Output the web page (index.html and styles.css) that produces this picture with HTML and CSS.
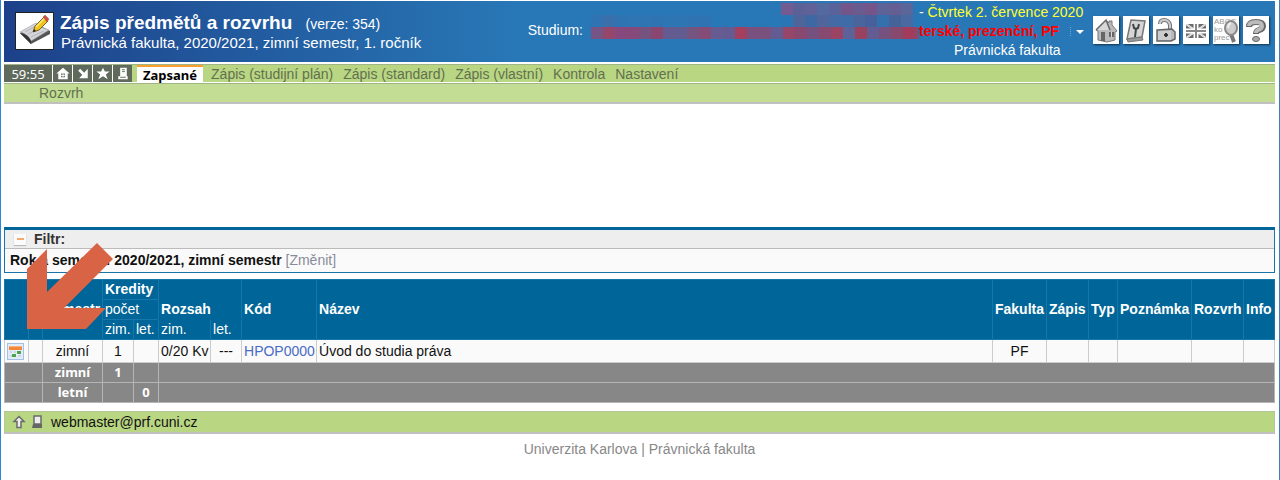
FILE: index.html
```html
<!DOCTYPE html>
<html lang="cs">
<head>
  <meta charset="UTF-8">
  <meta name="viewport" content="width=device-width, initial-scale=1.0">
  <title>Zápis předmětů a rozvrhu</title>
  <link rel="stylesheet" href="styles.css">
</head>
<body>

  <header class="top">
    <svg class="logo" viewBox="0 0 39 38" aria-hidden="true">
      <rect x=".5" y=".5" width="38" height="37" fill="#fff" stroke="#222"/>
      <path d="M5 21l17-9 13 7v3L16 32z" fill="#555"/>
      <path d="M5 20l16-9q3 4 13 7L16 29Q13 22 5 20z" fill="#d3d5da" stroke="#999" stroke-width=".6"/>
      <path d="M5 21q8 1 11 8v3z" fill="#333"/>
      <path d="M10 20l11-6M13 22l13-6M16 25l13-6" stroke="#b2b4ba" fill="none"/>
      <path d="M18 20l2-6 9-9 4 4-9 9z" fill="#f1c21b" stroke="#5d4a0b" stroke-width=".8"/>
      <path d="M21 15l9-9" stroke="#ffe97b" stroke-width="1.5"/>
      <path d="M28 5l2-2 4 4-2 3z" fill="#d9484e" stroke="#772" stroke-width=".5"/>
      <path d="M18 20l1-3 2 2z" fill="#222"/>
    </svg>
    <div class="title">
      <h1>Zápis předmětů a rozvrhu <span class="version">(verze: 354)</span></h1>
      <p>Právnická fakulta, 2020/2021, zimní semestr, 1. ročník</p>
    </div>
    <div class="study">
      <span class="study-label">Studium:</span>
      <svg class="mosaic" viewBox="0 0 328 36" shape-rendering="crispEdges" aria-hidden="true">
        <g id="mosaic"></g>
      </svg>
      <div class="study-info">
        <div>- <span class="date">Čtvrtek 2. července 2020</span></div>
        <div class="study-type">
          <strong>terské, prezenční, PF</strong>
          <button class="drop" aria-label="Výběr studia"><svg viewBox="0 0 16 12"><path d="M1.5 1v10" stroke="#6ea4d3" stroke-dasharray="1 1"/><path d="M7 4h8l-4 4z" fill="#fff"/></svg></button>
        </div>
        <div class="faculty">Právnická fakulta</div>
      </div>
    </div>
    <div class="tools">
      <button aria-label="Domů"><svg viewBox="0 0 26 28">
        <path d="M3 14L13 4l3 3V5h3v4l5 6-2 1v8l-8 2-9-2v-9z" fill="#bbb" stroke="#777"/>
        <path d="M3 14L13 4l4 10" fill="#d8d8d8" stroke="#666" stroke-width="1.5"/>
        <path d="M8 16h4v9H8zM16 16h5v5h-5z" fill="#666"/><path d="M18.5 16v5" stroke="#ddd"/>
      </svg></button>
      <button aria-label="Nástroje"><svg viewBox="0 0 26 28">
        <path d="M8 4l14 1-3 16-15 2z" fill="#d5d5d5" stroke="#777" stroke-width="1.5"/>
        <path d="M4 23l15-2 1 3-15 2z" fill="#999" stroke="#777"/>
        <path d="M10 8l1 4 2 1-1 8M16 8l-1 4-2 1" fill="none" stroke="#444" stroke-width="2"/>
      </svg></button>
      <button aria-label="Odhlásit"><svg viewBox="0 0 26 28">
        <path d="M7 8q0-4 4-4 5 0 6 5v5" fill="none" stroke="#777" stroke-width="4"/>
        <path d="M7 8q0-4 4-4 5 0 6 5v5" fill="none" stroke="#ccc" stroke-width="2"/>
        <path d="M4 14l15-1 3 3v7l-4 2H4z" fill="#bbb" stroke="#666" stroke-width="1.5"/>
        <path d="M5 15h13v9H5z" fill="#ccc"/><path d="M13 17v4M11 19h4" stroke="#333" stroke-width="2"/>
      </svg></button>
      <button aria-label="English"><svg viewBox="0 0 26 28">
        <path d="M3 8h20v14H3z" fill="#6b6b6b"/>
        <path d="M3 8l20 14M23 8L3 22" stroke="#fff" stroke-width="2"/>
        <path d="M3 8l20 14M23 8L3 22" stroke="#999" stroke-width=".5"/>
        <path d="M13 7v16M2 15h22" stroke="#fff" stroke-width="5"/>
        <path d="M13 8v14M3 15h20" stroke="#888" stroke-width="2"/>
      </svg></button>
      <button aria-label="Slovník"><svg viewBox="0 0 26 28">
        <g class="abc"><text x="1" y="8">ABCC</text><text x="1" y="16">ko</text><text x="1" y="24">prec</text></g>
        <path d="M18 18l3 8" stroke="#777" stroke-width="4"/>
        <ellipse cx="18" cy="12" rx="6" ry="7" fill="#ccc" stroke="#888" stroke-width="2"/>
        <path d="M15 12q0-4 3-5" fill="none" stroke="#eee" stroke-width="2"/>
      </svg></button>
      <button aria-label="Nápověda"><svg viewBox="0 0 26 28">
        <path d="M6 11q0-5 7-5 7 0 7 4 0 3-4 4-3 1-3 4" fill="none" stroke="#666" stroke-width="6"/>
        <path d="M6 10q0-4 7-4 6 0 6 4 0 3-4 4-2 1-2 3" fill="none" stroke="#bbb" stroke-width="4"/>
        <ellipse cx="13" cy="23" rx="3.5" ry="2.5" fill="#aaa" stroke="#666"/>
      </svg></button>
    </div>
  </header>

  <nav class="menu">
    <span class="timer">59:55</span>
    <button class="mini" aria-label="Úvod"><svg viewBox="0 0 18 18"><path d="M2 9l7-6 7 6h-2v6H4V9z" fill="#fff"/><path d="M7 9h4v4H7z" fill="#5f695c"/><path d="M9 9v4M7 11h4" stroke="#fff"/></svg></button>
    <button class="mini" aria-label="Zmenšit"><svg viewBox="0 0 18 18"><path d="M5 5l6 6" stroke="#fff" stroke-width="3"/><path d="M14 4v10H5z" fill="#fff"/></svg></button>
    <button class="mini" aria-label="Oblíbené"><svg viewBox="0 0 18 18"><path d="M9 3l2 4h5l-4 3 2 5-5-3-5 3 2-5-4-3h5z" fill="#fff"/></svg></button>
    <button class="mini" aria-label="Tisk"><svg viewBox="0 0 18 18"><path d="M6 3h7v9H6zM4 12h10v3H4z" fill="#fff"/><path d="M8 5h3M8 7h3M6 13h6" stroke="#5f695c"/></svg></button>
    <a class="tab active" href="#">Zapsané</a>
    <a class="tab" href="#">Zápis (studijní plán)</a>
    <a class="tab" href="#">Zápis (standard)</a>
    <a class="tab" href="#">Zápis (vlastní)</a>
    <a class="tab" href="#">Kontrola</a>
    <a class="tab" href="#">Nastavení</a>
  </nav>
  <div class="submenu"><a href="#">Rozvrh</a></div>

  <main>
    <section class="filter">
      <h2><button class="collapse" aria-label="Sbalit filtr"></button>Filtr:</h2>
      <p><strong>Rok a semestr: 2020/2021, zimní semestr</strong> <a href="#">[Změnit]</a></p>
    </section>

    <table class="subjects">
      <colgroup>
        <col class="c-icon"><col class="c-gap"><col class="c-sem"><col class="c-zim"><col class="c-let">
        <col class="c-rzim"><col class="c-rlet"><col class="c-code"><col>
        <col class="c-fac"><col class="c-reg"><col class="c-type"><col class="c-note"><col class="c-sched"><col class="c-info">
      </colgroup>
      <thead>
        <tr>
          <th rowspan="3"></th>
          <th rowspan="3"></th>
          <th rowspan="3" class="center">Semestr</th>
          <th colspan="2">Kredity</th>
          <th colspan="2" rowspan="2" class="low">Rozsah</th>
          <th rowspan="3">Kód</th>
          <th rowspan="3">Název</th>
          <th rowspan="3">Fakulta</th>
          <th rowspan="3">Zápis</th>
          <th rowspan="3">Typ</th>
          <th rowspan="3">Poznámka</th>
          <th rowspan="3">Rozvrh</th>
          <th rowspan="3">Info</th>
        </tr>
        <tr><th colspan="2" class="sub">počet</th></tr>
        <tr><th class="sub">zim.</th><th class="sub">let.</th><th class="sub">zim.</th><th class="sub">let.</th></tr>
      </thead>
      <tbody>
        <tr>
          <td><button class="calendar" aria-label="Rozvrh předmětu"><svg viewBox="0 0 17 17">
            <rect x=".5" y=".5" width="16" height="16" fill="#e3edf7" stroke="#a3c2e3"/>
            <path d="M2 3h13v4H2z" fill="#f5873a"/><path d="M2 3h13v1H2z" fill="#f9b27d"/>
            <path d="M3 8h11v6H3z" fill="#c9d7e8"/><path d="M6 8v6M10 8v6M3 11h11" stroke="#fff"/>
            <path d="M10 8h4v3h-4zM5 11h4v3H5z" fill="#4ba548"/>
          </svg></button></td>
          <td></td>
          <td class="center">zimní</td>
          <td class="center">1</td>
          <td></td>
          <td>0/20 Kv</td>
          <td class="center">---</td>
          <td><a href="#">HPOP0000</a></td>
          <td>Úvod do studia práva</td>
          <td class="center">PF</td>
          <td></td><td></td><td></td><td></td><td></td>
        </tr>
      </tbody>
      <tfoot>
        <tr><td colspan="2"></td><td>zimní</td><td>1</td><td></td><td colspan="10"></td></tr>
        <tr><td colspan="2"></td><td>letní</td><td></td><td>0</td><td colspan="10"></td></tr>
      </tfoot>
    </table>

    <svg class="pointer" viewBox="0 0 86 86" aria-hidden="true"><path d="M70 0l16 16-49 49h42L59 86H0V26L20 6v43z" fill="#d96445"/></svg>
  </main>

  <footer>
    <div class="contact">
      <button aria-label="Nahoru"><svg viewBox="0 0 14 14"><path d="M7 1.5l5 5H9v6H5v-6H2z" fill="#eee" stroke="#6b6b6b" stroke-width="1.5"/></svg></button>
      <button aria-label="Tisk"><svg viewBox="0 0 14 14"><path d="M4 1h7v8H4z" fill="#eee" stroke="#6b6b6b" stroke-width="1.5"/><path d="M3 9h9v4H2z" fill="#666"/></svg></button>
      <a href="#">webmaster@prf.cuni.cz</a>
    </div>
    <p>Univerzita Karlova | Právnická fakulta</p>
  </footer>

  <script>
    // rows of the blurred strip: x offset, y offset, cell colors
    const rows = [
      [190, 0, '#735b91 #5b6196 #61619a #536aa0 #5a629a #735589 #695b8f #735589 #5d6297 #655e93 #5a6599'],
      [190, 12, '#2a76b5 #4f6599 #3d68a3 #4f659c #436aa5 #3f6ca6 #49659c #45609a #346fae #456299 #4969a1'],
      [0, 12, '#2f73b2 #396faa #2f73b2 #2f74b3 #2f74b3 #3073b2 #2e75b4 #2e75b4 #3073b2 #3073b2'],
      [0, 24, '#765585 #94466b #87487e #87487a #76527f #8b4670 #625c91 #625c91 #75547f #844c76 #665c91 #665b90 #a4405f #7a517e #7a517d #625c93 #964668 #87496f #77517d #87496f #9b4362 #5d6299 #99425f #625c93 #77517d #88496d #a13c5c #87496f']
    ];
    let html = '';
    rows.forEach(([x, y, colors]) => {
      colors.split(' ').forEach((color, i) => {
        html += `<rect x="${x + i * 12}" y="${y}" width="12" height="12" fill="${color}"/>`;
      });
    });
    document.getElementById('mosaic').innerHTML = html;
  </script>

</body>
</html>
```
FILE: styles.css
```css
* {
  box-sizing: border-box;
}

body {
  margin: 0;
  min-height: 100vh;
  padding: 1px 4px 0 3px;
  border-left: 1px solid #2b86d9;
  border-right: 1px solid #3b7fc4;
  background-color: #fff;
  font-family: "Liberation Sans", Arial, sans-serif;
  font-size: 14px;
  line-height: 20px;
  color: #111;
}

h1, h2, p {
  margin: 0;
  font-size: 14px;
}

a {
  color: inherit;
  text-decoration: none;
}

button {
  padding: 0;
  border: none;
  background: none;
  cursor: pointer;
}

svg {
  display: block;
}

.top {
  display: flex;
  height: 61px;
  padding-right: 6px;
  background: linear-gradient(to right, #1d418a, #2877b6 40%, #2877b6);
  color: #fff;
}

.logo {
  width: 39px;
  height: 38px;
  margin: 11px 6px 0 11px;
}

.title {
  flex: 1;
  padding-top: 12px;
  white-space: nowrap;
}

.title h1 {
  font-size: 19px;
}

.version {
  margin-left: 8px;
  font-size: 14px;
  font-weight: normal;
}

.title p {
  padding-left: 1px;
  font-size: 15px;
  line-height: 18px;
}

.study {
  display: flex;
  white-space: nowrap;
}

.study-label {
  padding: 19px 8px 0 0;
}

.mosaic {
  width: 328px;
  height: 36px;
  margin-top: 2px;
}

.study-info {
  width: 174px;
  padding-top: 2px;
  line-height: 19px;
}

.date {
  color: #ff3;
}

.study-type {
  display: flex;
  align-items: center;
  gap: 10px;
  color: #f00;
}

.drop svg {
  width: 16px;
  height: 12px;
}

.faculty {
  padding-left: 35px;
}

.tools {
  display: flex;
  gap: 4px;
  padding-top: 15px;
}

.tools button {
  width: 26px;
  height: 28px;
  background-color: #fff;
  box-shadow: 1px 1px 2px rgba(0, 0, 0, 0.6);
}

.abc {
  font-size: 8px;
  fill: #999;
}

.menu {
  display: flex;
  height: 18px;
  margin-top: 2px;
  border-top: 1px solid #a0b585;
  background-color: #b9d683;
  line-height: 18px;
  color: #63704f;
}

.timer {
  width: 48px;
  background-color: #5f695c;
  color: #fff;
  font-family: "Noto Sans", sans-serif;
  font-size: 13px;
  text-align: center;
}

.mini {
  width: 20px;
  padding-left: 1px;
  border-left: 1px solid #fff;
  background-color: #5f695c;
}

.mini svg {
  width: 18px;
  height: 17px;
}

.tab {
  padding: 0 5px;
}

.active {
  margin: 0 3px 0 5px;
  padding: 0 6px;
  border-top: 2px solid #f9a02f;
  background-color: #fff;
  color: #000;
  font-family: "Noto Sans", sans-serif;
  font-size: 13px;
  font-weight: bold;
  line-height: 16px;
}

.submenu {
  height: 21px;
  margin-top: 1px;
  padding-left: 35px;
  border-top: 1px solid #a0b585;
  border-bottom: 2px solid #c0c0c0;
  background-color: #c4dd94;
  line-height: 18px;
  color: #63704f;
}

main {
  position: relative;
  padding-top: 123px;
}

.filter {
  margin-bottom: 6px;
  border: 1px solid #1a74a6;
  border-top: 3px solid #069;
  background-color: #fafafa;
}

.filter h2 {
  display: flex;
  align-items: center;
  gap: 8px;
  height: 19px;
  padding-left: 9px;
  border-bottom: 1px solid #bbb;
  background-color: #eee;
  color: #333;
}

.filter p {
  height: 23px;
  padding-left: 5px;
  line-height: 23px;
}

.filter a {
  color: #888c99;
}

.collapse {
  display: grid;
  place-items: center;
  width: 12px;
  height: 11px;
  background-color: #fbfbfb;
  box-shadow: 0 1px 1px #bbb;
}

.collapse::before {
  content: "";
  width: 7px;
  height: 2px;
  background-color: #f7a86d;
}

.subjects {
  width: 100%;
  table-layout: fixed;
  border-collapse: collapse;
}

.subjects th,
.subjects td {
  height: 20px;
  padding: 0 0 0 2px;
  border: 1px solid #ccc;
  line-height: 19px;
  text-align: left;
  white-space: nowrap;
}

.subjects th {
  border-color: #1777a8;
  background-color: #069;
  color: #fff;
}

.subjects .low {
  vertical-align: bottom;
  border-bottom-color: #069;
}

.subjects .sub {
  font-weight: normal;
}

.subjects .center {
  padding: 0;
  text-align: center;
}

.subjects tbody td {
  height: 23px;
  background-color: #fafafa;
}

.subjects tbody a {
  color: #4a6bc5;
}

.subjects tfoot td {
  padding: 0;
  background-color: #878787;
  border-color: #b5b5b5;
  color: #fff;
  font-family: "Noto Sans", sans-serif;
  font-size: 13px;
  font-weight: bold;
  text-align: center;
}

.calendar {
  display: block;
}

.calendar svg {
  width: 17px;
  height: 17px;
}

.c-icon { width: 24px; }
.c-gap { width: 14px; }
.c-sem { width: 60px; }
.c-zim { width: 31px; }
.c-let { width: 25px; }
.c-rzim { width: 52px; }
.c-rlet { width: 31px; }
.c-code { width: 75px; }
.c-fac { width: 54px; }
.c-reg { width: 42px; }
.c-type { width: 29px; }
.c-note { width: 74px; }
.c-sched { width: 52px; }
.c-info { width: 31px; }

/* arrow drawn over the table, pointing at the calendar icon */
.pointer {
  position: absolute;
  left: 23px;
  top: 139px;
  width: 86px;
  height: 86px;
}

.contact {
  display: flex;
  align-items: center;
  gap: 4px;
  height: 23px;
  margin-top: 8px;
  padding-left: 7px;
  border: 1px solid #b3c79a;
  border-bottom: 2px solid #c0c0c0;
  background-color: #b9d683;
}

.contact svg {
  width: 14px;
  height: 14px;
}

.contact a {
  padding-left: 3px;
}

footer p {
  padding-top: 5px;
  text-align: center;
  color: #888;
}
```
